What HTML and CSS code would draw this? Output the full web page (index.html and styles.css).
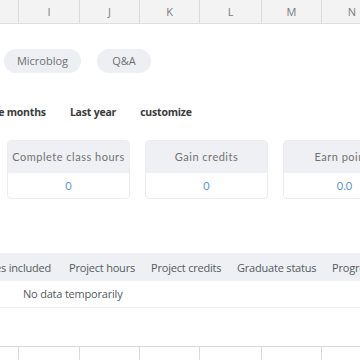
FILE: index.html
```html
<!DOCTYPE html>
<html>
<head>
<meta charset="utf-8">
<link rel="stylesheet" href="styles.css">
</head>
<body>
<div class="sheet">
  <div class="colbar">
    <div class="col c0"></div>
    <div class="col c1">I</div>
    <div class="col c2">J</div>
    <div class="col c3">K</div>
    <div class="col c4">L</div>
    <div class="col c5">M</div>
    <div class="col c6">N</div>
  </div>
  <div class="content">
    <div class="pills">
      <span class="pill pill-mb">Microblog</span>
      <span class="pill pill-qa">Q&amp;A</span>
    </div>
    <div class="tabs">
      <span class="tab t1">Three months</span>
      <span class="tab t2">Last year</span>
      <span class="tab t3">customize</span>
    </div>
    <div class="cards">
      <div class="card">
        <div class="card-head">Complete class hours</div>
        <div class="card-val">0</div>
      </div>
      <div class="card">
        <div class="card-head">Gain credits</div>
        <div class="card-val">0</div>
      </div>
      <div class="card">
        <div class="card-head">Earn points</div>
        <div class="card-val">0.0</div>
      </div>
    </div>
    <div class="table">
      <div class="thead">
        <span class="th th1">Courses included</span>
        <span class="th th2">Project hours</span>
        <span class="th th3">Project credits</span>
        <span class="th th4">Graduate status</span>
        <span class="th th5">Progress</span>
      </div>
      <div class="trow">No data temporarily</div>
    </div>
  </div>
  <div class="rowbar">
    <div class="col c0"></div>
    <div class="col c1"></div>
    <div class="col c2"></div>
    <div class="col c3"></div>
    <div class="col c4"></div>
    <div class="col c5"></div>
    <div class="col c6"></div>
  </div>
</div>
</body>
</html>
```
FILE: styles.css
```css
html, body {
  margin: 0;
  padding: 0;
  background: #ffffff;
}
body {
  font-family: "Open Sans", "Noto Sans", sans-serif;
  width: 360px;
  height: 360px;
  overflow: hidden;
}
.sheet {
  width: 360px;
  height: 360px;
  overflow: hidden;
  display: flex;
  flex-direction: column;
}
.colbar {
  height: 24px;
  flex: none;
  display: flex;
  background: #f3f3f3;
  border-bottom: 1px solid #dedede;
  box-sizing: border-box;
}
.col {
  flex: none;
  box-sizing: border-box;
  border-right: 1px solid #dadada;
  display: flex;
  align-items: center;
  justify-content: center;
  font-size: 11px;
  color: #7a7a7a;
}
.c0 { width: 19px; }
.c1 { width: 61px; }
.c2 { width: 60px; }
.c3 { width: 60px; }
.c4 { width: 62px; }
.c5 { width: 60px; }
.c6 { width: 60px; border-right: none; }
.content {
  flex: 1;
  overflow: hidden;
}
.pills {
  display: flex;
  gap: 16px;
  margin-top: 25px;
  padding-left: 4px;
}
.pill {
  height: 24px;
  line-height: 24px;
  border-radius: 12px;
  background: #edeff2;
  color: #707070;
  font-size: 11px;
  text-align: center;
  box-sizing: border-box;
}
.pill-mb { width: 77px; }
.pill-qa { width: 54px; }
.tabs {
  display: flex;
  gap: 24px;
  margin-top: 31px;
  margin-left: -25px;
  white-space: nowrap;
  height: 16px;
  line-height: 16px;
}
.tab {
  font-size: 10.5px;
  font-weight: 700;
  letter-spacing: -0.2px;
  color: #3a3a3a;
}
.cards {
  display: flex;
  gap: 15px;
  margin-top: 20px;
  padding-left: 7px;
}
.card {
  flex: none;
  width: 123px;
  border: 1px solid #eaecef;
  border-radius: 4px;
  overflow: hidden;
  box-sizing: border-box;
}
.card-head {
  height: 32px;
  line-height: 32px;
  background: #eef0f3;
  text-align: center;
  font-family: Lato, "Open Sans", sans-serif;
  font-size: 11px;
  letter-spacing: 0.5px;
  color: #727272;
  white-space: nowrap;
}
.card-val {
  height: 25px;
  line-height: 25px;
  text-align: center;
  font-family: Lato, "Open Sans", sans-serif;
  font-size: 11px;
  color: #5b94d3;
}
.table {
  margin-top: 54px;
}
.thead {
  display: flex;
  height: 28px;
  align-items: center;
  background: #eef0f3;
  white-space: nowrap;
  margin-left: -34px;
}
.th {
  flex: none;
  font-size: 11px;
  color: #555a60;
  letter-spacing: -0.2px;
}
.th1 { width: 103px; }
.th2 { width: 82px; }
.th3 { width: 86px; }
.th4 { width: 95px; }
.trow {
  height: 27px;
  line-height: 26px;
  border-bottom: 1px solid #eeeeee;
  box-sizing: border-box;
  padding-left: 23px;
  font-size: 11px;
  color: #555a60;
  letter-spacing: -0.2px;
}
.rowbar {
  height: 14px;
  flex: none;
  display: flex;
  background: #ffffff;
  border-top: 1px solid #dadada;
  box-sizing: border-box;
}
```
